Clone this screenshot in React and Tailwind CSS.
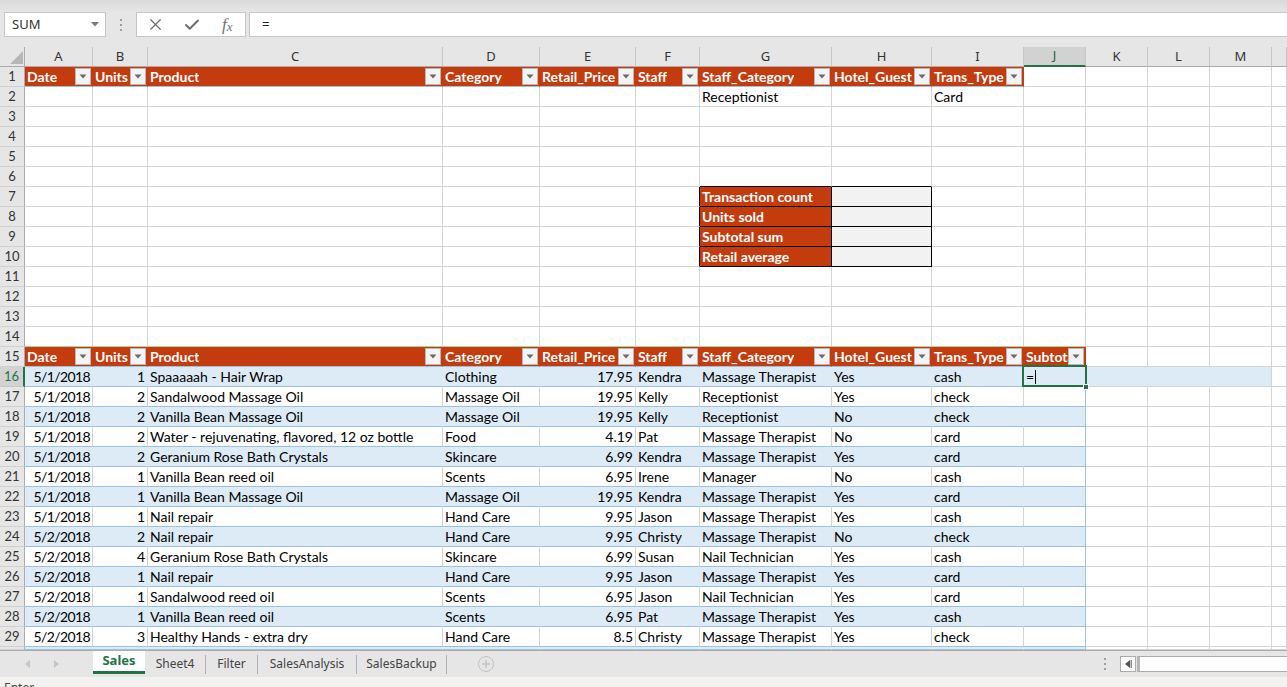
import { X, Check } from 'lucide-react'

const WIDTHS = [
  'w-[68px]', 'w-[55px]', 'w-[295px]', 'w-[97px]', 'w-[96px]', 'w-[64px]', 'w-[132px]',
  'w-[100px]', 'w-[92px]', 'w-[62px]', 'w-[62px]', 'w-[62px]', 'w-[62px]', 'flex-1',
]
const LETTERS = ['A', 'B', 'C', 'D', 'E', 'F', 'G', 'H', 'I', 'J', 'K', 'L', 'M', '']
const HEAD = ['Date', 'Units', 'Product', 'Category', 'Retail_Price', 'Staff', 'Staff_Category', 'Hotel_Guest', 'Trans_Type', 'Subtotal']
const SUMMARY = ['Transaction count', 'Units sold', 'Subtotal sum', 'Retail average']

const DATA = [
  ['5/1/2018', '1', 'Spaaaaah - Hair Wrap', 'Clothing', '17.95', 'Kendra', 'Massage Therapist', 'Yes', 'cash'],
  ['5/1/2018', '2', 'Sandalwood Massage Oil', 'Massage Oil', '19.95', 'Kelly', 'Receptionist', 'Yes', 'check'],
  ['5/1/2018', '2', 'Vanilla Bean Massage Oil', 'Massage Oil', '19.95', 'Kelly', 'Receptionist', 'No', 'check'],
  ['5/1/2018', '2', 'Water - rejuvenating, flavored, 12 oz bottle', 'Food', '4.19', 'Pat', 'Massage Therapist', 'No', 'card'],
  ['5/1/2018', '2', 'Geranium Rose Bath Crystals', 'Skincare', '6.99', 'Kendra', 'Massage Therapist', 'Yes', 'card'],
  ['5/1/2018', '1', 'Vanilla Bean reed oil', 'Scents', '6.95', 'Irene', 'Manager', 'No', 'cash'],
  ['5/1/2018', '1', 'Vanilla Bean Massage Oil', 'Massage Oil', '19.95', 'Kendra', 'Massage Therapist', 'Yes', 'card'],
  ['5/1/2018', '1', 'Nail repair', 'Hand Care', '9.95', 'Jason', 'Massage Therapist', 'Yes', 'cash'],
  ['5/2/2018', '2', 'Nail repair', 'Hand Care', '9.95', 'Christy', 'Massage Therapist', 'No', 'check'],
  ['5/2/2018', '4', 'Geranium Rose Bath Crystals', 'Skincare', '6.99', 'Susan', 'Nail Technician', 'Yes', 'cash'],
  ['5/2/2018', '1', 'Nail repair', 'Hand Care', '9.95', 'Jason', 'Massage Therapist', 'Yes', 'card'],
  ['5/2/2018', '1', 'Sandalwood reed oil', 'Scents', '6.95', 'Jason', 'Nail Technician', 'Yes', 'card'],
  ['5/2/2018', '1', 'Vanilla Bean reed oil', 'Scents', '6.95', 'Pat', 'Massage Therapist', 'Yes', 'cash'],
  ['5/2/2018', '3', 'Healthy Hands - extra dry', 'Hand Care', '8.5', 'Christy', 'Massage Therapist', 'Yes', 'check'],
]

// cell colour schemes
const GRID = 'bg-white border-r-[#d4d4d4] border-b-[#d4d4d4]'
const HDR = 'bg-[#c43b0e] border-r-[#c43b0e] border-b-[#9bc2e6] text-white font-bold'
const BAND = 'bg-[#ddebf7] border-r-[#ddebf7] border-b-[#9bc2e6]'
const BAND_END = 'bg-[#ddebf7] border-r-[#9bc2e6] border-b-[#9bc2e6]'
const PLAIN = 'bg-white border-r-[#d4d4d4] border-b-[#9bc2e6]'
const PLAIN_END = 'bg-white border-r-[#9bc2e6] border-b-[#9bc2e6]'
const SUM_L = 'bg-[#c43b0e] border-r-black border-b-black text-white font-bold'
const SUM_V = 'bg-[#f2f2f2] border-r-black border-b-black'
const EDGE_R = 'bg-white border-r-black border-b-[#d4d4d4]'
const EDGE_B = 'bg-white border-r-[#d4d4d4] border-b-black'
const GREEN_B = 'bg-white border-r-[#d4d4d4] border-b-[#b3cf9b]'
const ROW16X = 'bg-[#ddebf7] border-r-[#ddebf7] border-b-[#d4d4d4]'
const ROW16M = 'bg-[#ddebf7] border-r-[#d4d4d4] border-b-[#d4d4d4]'

const cellScheme = (r, c) => {
  if (r === 1 && c <= 8) return HDR
  if (r === 15 && c <= 9) return HDR
  if (r >= 7 && r <= 10) {
    if (c === 5) return EDGE_R
    if (c === 6) return SUM_L
    if (c === 7) return SUM_V
  }
  if (r === 6 && (c === 6 || c === 7)) return EDGE_B
  if (r === 14 && c <= 9) return GREEN_B
  if (r >= 16) {
    const band = (r - 16) % 2 === 0
    if (c <= 8) return band ? BAND : PLAIN
    if (c === 9) return band ? BAND_END : PLAIN_END
    if (r === 16 && c <= 11) return ROW16X
    if (r === 16 && c === 12) return ROW16M
  }
  return GRID
}

const DropBtn = () => (
  <span className="ml-auto mr-[1px] w-[16px] h-[17px] shrink-0 bg-[#f4f4f4] border border-[#b8b8b8] flex items-center justify-center">
    <svg width="8" height="5" viewBox="0 0 8 5">
      <path d="M0.5 0.5h7L4 4.5z" fill="#6a6a6a" />
    </svg>
  </span>
)

const cellContent = (r, c) => {
  if ((r === 1 && c <= 8) || (r === 15 && c <= 9)) {
    return (
      <>
        <span className="pl-[2px] min-w-0 overflow-hidden whitespace-nowrap">{HEAD[c]}</span>
        <DropBtn />
      </>
    )
  }
  if (r === 2 && c === 6) return <span className="pl-[2px]">Receptionist</span>
  if (r === 2 && c === 8) return <span className="pl-[2px]">Card</span>
  if (r >= 7 && r <= 10 && c === 6) return <span className="pl-[2px]">{SUMMARY[r - 7]}</span>
  if (r >= 16 && r <= 29 && c <= 8) {
    const v = DATA[r - 16][c]
    if (c === 0) return <span className="ml-auto pr-[2px] tracking-[-0.6px]">{v}</span>
    if (c === 1 || c === 4) return <span className="ml-auto pr-[2px]">{v}</span>
    return <span className="pl-[2px]">{v}</span>
  }
  if (r === 16 && c === 9) {
    return (
      <>
        <span className="pl-[2px] flex items-center">
          =<span className="ml-[1px] w-[1px] h-[14px] bg-black" />
        </span>
        <span className="absolute left-[-2px] top-[-2px] w-[65px] h-[22px] border-2 border-[#217346]" />
        <span className="absolute right-[-4px] bottom-[-4px] w-[6px] h-[6px] bg-[#217346] border border-white" />
      </>
    )
  }
  return null
}

const RowHead = ({ r }) => {
  const active = r === 16
  return (
    <div
      className={
        active
          ? 'w-[25px] shrink-0 h-full bg-[#d2d2d2] border-b border-b-[#c6c6c6] border-r-2 border-r-[#217346] flex items-center justify-center text-[13px] text-[#217346]'
          : 'w-[25px] shrink-0 h-full bg-[#e6e6e6] border-b border-r border-b-[#d0d0d0] border-r-[#ababab] flex items-center justify-center text-[13px] text-[#333]'
      }
    >
      {r <= 29 ? r : ''}
    </div>
  )
}

const SheetRow = ({ r }) => (
  <div className={r === 30 ? 'h-[3px] shrink-0 flex overflow-hidden' : 'h-[20px] shrink-0 flex'}>
    <RowHead r={r} />
    {WIDTHS.map((w, c) => (
      <div
        key={c}
        className={`${w} ${cellScheme(r, c)} shrink-0 h-full border-r border-b flex items-center overflow-hidden whitespace-nowrap ${r === 16 && c === 9 ? 'relative overflow-visible' : ''}`}
      >
        {cellContent(r, c)}
      </div>
    ))}
  </div>
)

const ColumnHeads = () => (
  <div className="h-[20px] shrink-0 flex bg-[#e6e6e6] text-[13px] text-[#333]">
    <div className="w-[25px] shrink-0 h-full border-r border-b border-r-[#ababab] border-b-[#ababab] flex items-end justify-end pr-[1px] pb-[2px]">
      <svg width="13" height="13" viewBox="0 0 13 13">
        <path d="M13 0V13H0z" fill="#b7b7b7" />
      </svg>
    </div>
    {WIDTHS.map((w, c) =>
      c === 9 ? (
        <div key={c} className={`${w} shrink-0 h-full bg-[#d2d2d2] border-r border-r-[#c6c6c6] border-b-2 border-b-[#217346] flex items-center justify-center text-[#1f5e3a]`}>
          {LETTERS[c]}
        </div>
      ) : (
        <div key={c} className={`${w} shrink-0 h-full border-r border-b border-r-[#c6c6c6] border-b-[#ababab] flex items-center justify-center`}>
          {LETTERS[c]}
        </div>
      )
    )}
  </div>
)

const Dots = () => (
  <div className="flex flex-col gap-[3px]">
    <span className="w-[2px] h-[2px] bg-[#9e9e9e]" />
    <span className="w-[2px] h-[2px] bg-[#9e9e9e]" />
    <span className="w-[2px] h-[2px] bg-[#9e9e9e]" />
  </div>
)

const FormulaBar = () => (
  <div className="shrink-0 bg-[#e6e6e6]">
    <div className="h-[12px] bg-linear-to-b from-[#d9d9d9] to-[#e6e6e6]" />
    <div className="h-[25px] flex">
      <div className="ml-[4px] w-[102px] shrink-0 border border-[#c6c6c6] bg-white flex items-center pl-[7px] pr-[6px] text-[13px] text-[#333]">
        SUM
        <svg className="ml-auto" width="8" height="5" viewBox="0 0 8 5">
          <path d="M0 0h8L4 4.5z" fill="#7a7a7a" />
        </svg>
      </div>
      <div className="w-[30px] shrink-0 flex items-center justify-center">
        <Dots />
      </div>
      <div className="w-[110px] shrink-0 border border-[#c6c6c6] bg-white flex items-center pl-[1px] text-[#6e6e6e]">
        <span className="w-[36px] flex justify-center">
          <X size={19} strokeWidth={1.6} />
        </span>
        <span className="w-[36px] flex justify-center">
          <Check size={18} strokeWidth={2.6} />
        </span>
        <span className="w-[36px] flex justify-center items-end font-['Liberation_Serif',serif] italic text-[17px] leading-none">
          f<span className="text-[13px]">x</span>
        </span>
      </div>
      <div className="ml-[3px] flex-1 border border-r-0 border-[#c6c6c6] bg-white flex items-center pl-[12px] text-[13px] text-[#222]">
        =
      </div>
    </div>
    <div className="h-[10px]" />
  </div>
)

const TABS = [
  { name: 'Sheet4', w: 'w-[60px]' },
  { name: 'Filter', w: 'w-[51px]' },
  { name: 'SalesAnalysis', w: 'w-[98px]' },
  { name: 'SalesBackup', w: 'w-[89px]' },
]

const TabBar = () => (
  <div className="h-[27px] shrink-0 bg-[#e6e6e6] border-t border-[#ababab] flex text-[12px] text-[#444]">
    <div className="w-[93px] shrink-0 flex items-center pl-[25px] gap-[24px]">
      <svg width="5" height="8" viewBox="0 0 5 8">
        <path d="M5 0v8L0 4z" fill="#c4c4c4" />
      </svg>
      <svg width="5" height="8" viewBox="0 0 5 8">
        <path d="M0 0v8l5-4z" fill="#c4c4c4" />
      </svg>
    </div>
    <div className="w-[52px] h-[23px] shrink-0 bg-white border-b-[3px] border-[#217346] flex items-center justify-center font-bold text-[#217346] text-[13px]">
      Sales
    </div>
    {TABS.map((t) => (
      <div key={t.name} className="flex items-center">
        <div className={`${t.w} h-full flex items-center justify-center`}>{t.name}</div>
        <span className="w-[1px] h-[19px] bg-[#b0b0b0]" />
      </div>
    ))}
    <div className="ml-[31px] flex items-center">
      <span className="w-[16px] h-[16px] rounded-full border border-[#c2c2c2] flex items-center justify-center text-[#c2c2c2]">
        <svg width="8" height="8" viewBox="0 0 8 8">
          <path d="M4 0v8M0 4h8" stroke="#c2c2c2" strokeWidth="1.4" />
        </svg>
      </span>
    </div>
    <div className="flex-1" />
    <div className="w-[30px] shrink-0 flex items-center justify-center">
      <Dots />
    </div>
    <div className="shrink-0 flex items-center pr-0">
      <div className="w-[16px] h-[16px] border border-[#ababab] bg-white flex items-center justify-center">
        <svg width="7" height="8" viewBox="0 0 7 8">
          <path d="M5 0v8L0 4z" fill="#555" />
          <path d="M6.2 0v8" stroke="#555" strokeWidth="1" />
        </svg>
      </div>
      <div className="ml-[1px] w-[150px] h-[16px] border border-r-0 border-[#ababab] border-l-[3px] border-l-[#b5b5b5] bg-white" />
    </div>
  </div>
)

export default function App() {
  const rows = []
  for (let r = 1; r <= 30; r++) rows.push(r)
  return (
    <div className="w-full h-[687px] overflow-hidden bg-white flex flex-col font-['Noto_Sans',sans-serif]">
      <FormulaBar />
      <div className="h-[603px] shrink-0 overflow-hidden flex flex-col font-['Lato','Liberation_Sans',sans-serif] text-[14px] text-black">
        <div className="font-['Noto_Sans',sans-serif]">
          <ColumnHeads />
        </div>
        {rows.map((r) => (
          <SheetRow key={r} r={r} />
        ))}
      </div>
      <TabBar />
      <div className="h-[10px] shrink-0 bg-[#f3f2f1] overflow-hidden pl-[4px] pt-[5px] text-[12px] leading-none text-[#444]">
        Enter
      </div>
    </div>
  )
}
